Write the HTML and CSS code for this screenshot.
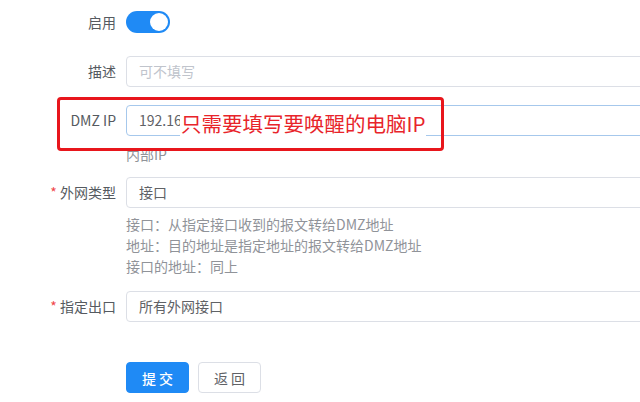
FILE: index.html
```html
<!DOCTYPE html>
<html lang="zh-CN">
<head>
<meta charset="utf-8">
<title>DMZ</title>
<link rel="stylesheet" href="styles.css">
</head>
<body>
<div class="form">
  <div class="item item-switch">
    <div class="label">启用</div>
    <div class="control">
      <span class="switch"><span class="knob"></span></span>
    </div>
  </div>

  <div class="item">
    <div class="label">描述</div>
    <div class="control">
      <div class="input placeholder">可不填写</div>
    </div>
  </div>

  <div class="item item-dmz">
    <div class="label">DMZ IP</div>
    <div class="control">
      <div class="input input-focus">192.168.1.254</div>
      <div class="help">内部IP</div>
    </div>
  </div>

  <div class="item item-type">
    <div class="label"><span class="req">*</span> 外网类型</div>
    <div class="control">
      <div class="input">接口</div>
      <div class="help help-list">
        <div>接口：从指定接口收到的报文转给DMZ地址</div>
        <div>地址：目的地址是指定地址的报文转给DMZ地址</div>
        <div>接口的地址：同上</div>
      </div>
    </div>
  </div>

  <div class="item item-out">
    <div class="label"><span class="req">*</span> 指定出口</div>
    <div class="control">
      <div class="input">所有外网接口</div>
    </div>
  </div>

  <div class="actions">
    <button class="btn btn-primary">提 交</button>
    <button class="btn">返 回</button>
  </div>

  <div class="annotation">
    <span class="annotation-text">只需要填写要唤醒的电脑IP</span>
  </div>
</div>
</body>
</html>
```

FILE: styles.css
```css
html, body {
  margin: 0;
  padding: 0;
  overflow: hidden;
  background: #ffffff;
}

body {
  font-family: "Noto Sans CJK SC", "Noto Sans", sans-serif;
  font-size: 14px;
  color: #606266;
  width: 640px;
  height: 402px;
}

.form {
  position: relative;
  padding-top: 6px;
}

.item {
  display: flex;
  align-items: flex-start;
  margin-bottom: 18px;
}

.item-switch {
  height: 32px;
  align-items: center;
}

.item-switch .label {
  line-height: 32px;
}

.item-dmz {
  margin-bottom: 12px;
}

.item-type {
  margin-bottom: 14px;
}

.item-out {
  margin-bottom: 40px;
}

.label {
  flex: none;
  width: 116px;
  padding-right: 10px;
  text-align: right;
  line-height: 31px;
  color: #555a60;
  white-space: nowrap;
}

.req {
  color: #f0474a;
}

.control {
  flex: none;
  width: 620px;
}

.switch {
  display: block;
  position: relative;
  width: 44px;
  height: 22px;
  border-radius: 11px;
  background: #1f8af5;
}

.knob {
  position: absolute;
  top: 2px;
  right: 2px;
  width: 18px;
  height: 18px;
  border-radius: 50%;
  background: #ffffff;
}

.input {
  box-sizing: border-box;
  height: 31px;
  line-height: 29px;
  border: 1px solid #dcdfe6;
  border-radius: 4px;
  padding: 0 12px;
  color: #606266;
  background: #fff;
}

.placeholder {
  color: #c0c4cc;
}

.input-focus {
  border-color: #a6c8ec;
}

.help {
  color: #909399;
  line-height: 21px;
  margin-top: 8px;
}

.help-list {
  margin-top: 6px;
}

.actions {
  display: flex;
  gap: 9px;
  padding-left: 126px;
}

.btn {
  width: 63px;
  height: 31px;
  border: 1px solid #dcdfe6;
  border-radius: 4px;
  background: #ffffff;
  color: #606266;
  font-family: "Noto Sans CJK SC", sans-serif;
  font-size: 14px;
  padding: 0;
}

.btn-primary {
  background: #1f8af5;
  border-color: #1f8af5;
  color: #ffffff;
  font-weight: 500;
}

.annotation {
  position: absolute;
  left: 57px;
  top: 97px;
  width: 387px;
  height: 54px;
  box-sizing: border-box;
  border: 3px solid #e8161c;
  border-radius: 4px;
}

.annotation-text {
  position: absolute;
  left: 120px;
  top: 10px;
  font-size: 20.5px;
  line-height: 26px;
  color: #e8242a;
  background: #ffffff;
  padding: 0 1px;
  white-space: nowrap;
}
```
